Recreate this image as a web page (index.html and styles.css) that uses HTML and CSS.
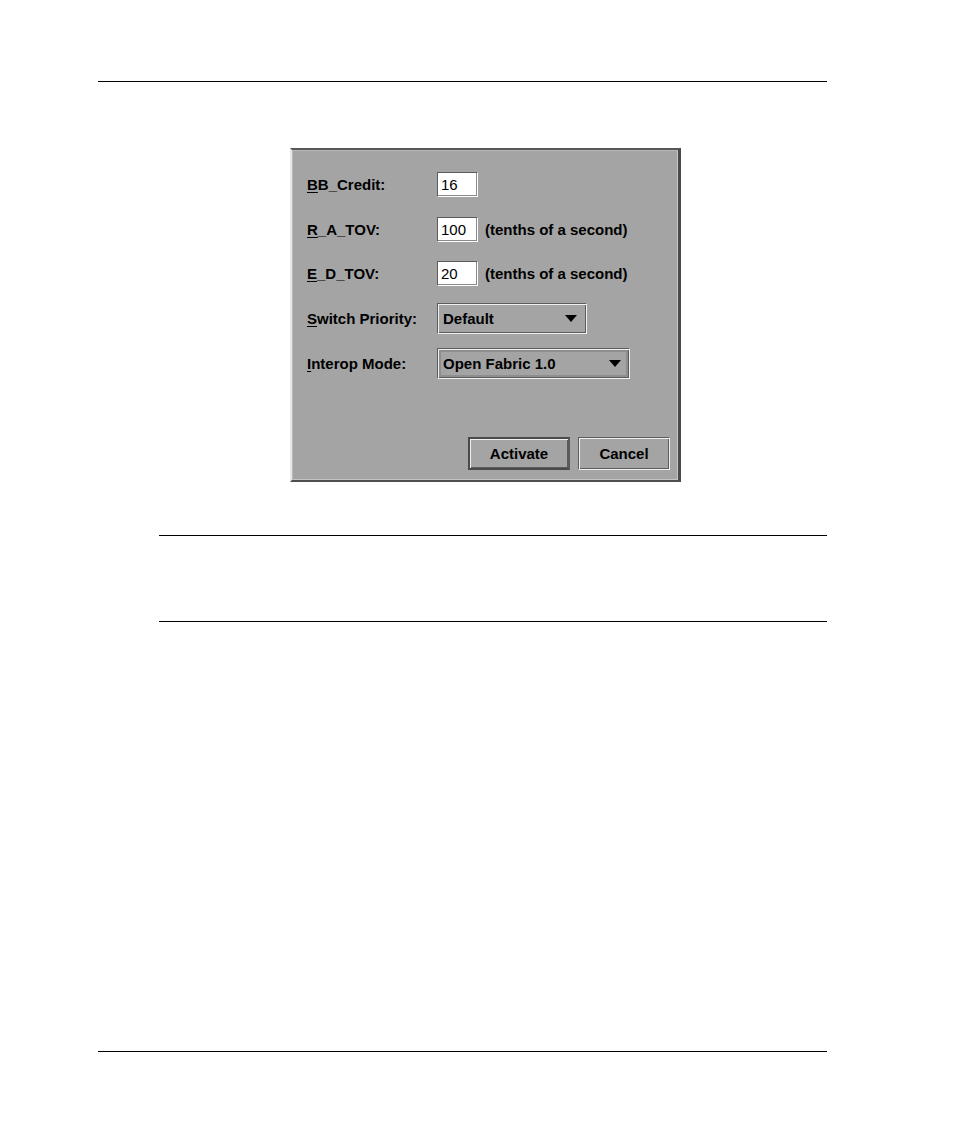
FILE: index.html
```html
<!DOCTYPE html>
<html>
<head>
<meta charset="utf-8">
<link rel="stylesheet" href="styles.css">
</head>
<body>
<div class="page">
  <div class="rule rule-top"></div>
  <div class="figure">
    <div class="dialog">
      <div class="form">
        <div class="label"><span class="mn">B</span>B_Credit:</div>
        <div class="ctrl"><div class="field">16</div></div>

        <div class="label"><span class="mn">R</span>_A_TOV:</div>
        <div class="ctrl"><div class="field">100</div><span class="unit">(tenths of a second)</span></div>

        <div class="label"><span class="mn">E</span>_D_TOV:</div>
        <div class="ctrl"><div class="field">20</div><span class="unit">(tenths of a second)</span></div>

        <div class="label"><span class="mn">S</span>witch Priority:</div>
        <div class="ctrl"><div class="combo combo-short"><span>Default</span><i class="arrow"></i></div></div>

        <div class="label"><span class="mn">I</span>nterop Mode:</div>
        <div class="ctrl"><div class="combo combo-long focus"><span>Open Fabric 1.0</span><i class="arrow"></i></div></div>
      </div>
      <div class="buttons">
        <div class="btn btn-default">Activate</div>
        <div class="btn btn-cancel">Cancel</div>
      </div>
    </div>
  </div>
  <div class="note">
    <div class="rule"></div>
    <div class="note-body"></div>
    <div class="rule"></div>
  </div>
  <div class="rule rule-bottom"></div>
</div>
</body>
</html>
```

FILE: styles.css
```css
html, body {
  margin: 0;
  padding: 0;
  background: #ffffff;
}
body {
  font-family: "Liberation Sans", Arial, sans-serif;
  width: 954px;
  height: 1145px;
  overflow: hidden;
}
.page {
  display: flex;
  flex-direction: column;
  padding-top: 81px;
}
.rule {
  height: 1px;
  background: #000;
}
.rule-top, .rule-bottom {
  margin-left: 98px;
  width: 729px;
}
.rule-bottom {
  margin-top: 429px;
}
.figure {
  margin-top: 66px;
  margin-left: 290px;
}
.dialog {
  box-sizing: border-box;
  width: 391px;
  height: 334px;
  background: #a4a4a4;
  border-top: 2px solid #575757;
  border-left: 2px solid #e8e8e8;
  border-right: 3px solid #4a4a4a;
  border-bottom: 2px solid #4f4f4f;
  box-shadow: inset 1px 1px 0 #b8b8b8, inset -1px -1px 0 #c4c4c4;
  padding: 12px 8px 0 15px;
  display: flex;
  flex-direction: column;
  color: #000;
}
.form {
  display: grid;
  grid-template-columns: 130px 1fr;
  grid-auto-rows: 44.75px;
  align-items: center;
}
.label {
  font-weight: bold;
  font-size: 15px;
}
.mn {
  text-decoration: underline;
  text-underline-offset: 2px;
}
.ctrl {
  display: flex;
  align-items: center;
  gap: 7px;
}
.field {
  box-sizing: border-box;
  width: 41px;
  height: 25px;
  background: #fff;
  border: 1px solid;
  border-color: #5c5c5c #ffffff #ffffff #5c5c5c;
  box-shadow: inset -1px -1px 0 #8a8a8a;
  padding-left: 3px;
  font-size: 15px;
  line-height: 23px;
}
.unit {
  font-weight: bold;
  font-size: 15px;
}
.combo {
  box-sizing: border-box;
  height: 31px;
  border: 1px solid;
  border-color: #5c5c5c #f0f0f0 #f0f0f0 #5c5c5c;
  box-shadow: inset 1px 1px 0 #f0f0f0, inset -1px -1px 0 #5c5c5c;
  display: flex;
  align-items: center;
  justify-content: space-between;
  padding: 0 8px 0 5px;
  font-weight: bold;
  font-size: 15px;
}
.combo-short {
  width: 150px;
  padding-right: 9px;
}
.combo-long {
  width: 193px;
}
.combo.focus {
  box-shadow: inset 1px 1px 0 #f0f0f0, inset -1px -1px 0 #5c5c5c, inset 0 0 0 3px #8e8e8e;
}
.arrow {
  width: 0;
  height: 0;
  border-left: 6px solid transparent;
  border-right: 6px solid transparent;
  border-top: 7px solid #000;
}
.buttons {
  margin-top: auto;
  margin-bottom: 10px;
  display: flex;
  justify-content: flex-end;
  gap: 8px;
}
.btn {
  box-sizing: border-box;
  height: 33px;
  display: flex;
  align-items: center;
  justify-content: center;
  font-weight: bold;
  font-size: 15px;
}
.btn-default {
  width: 102px;
  border: 2px solid #4a4a4a;
  border-right-color: #5a5a5a;
  box-shadow: inset 1px 1px 0 #f0f0f0, inset -1px -1px 0 #5c5c5c;
}
.btn-cancel {
  width: 92px;
  border: 1px solid;
  border-color: #5c5c5c #f0f0f0 #f0f0f0 #5c5c5c;
  box-shadow: inset 1px 1px 0 #f0f0f0, inset -1px -1px 0 #5c5c5c;
}
.note {
  margin-top: 53px;
  margin-left: 159px;
  width: 668px;
  display: flex;
  flex-direction: column;
}
.note-body {
  height: 85px;
}
```
